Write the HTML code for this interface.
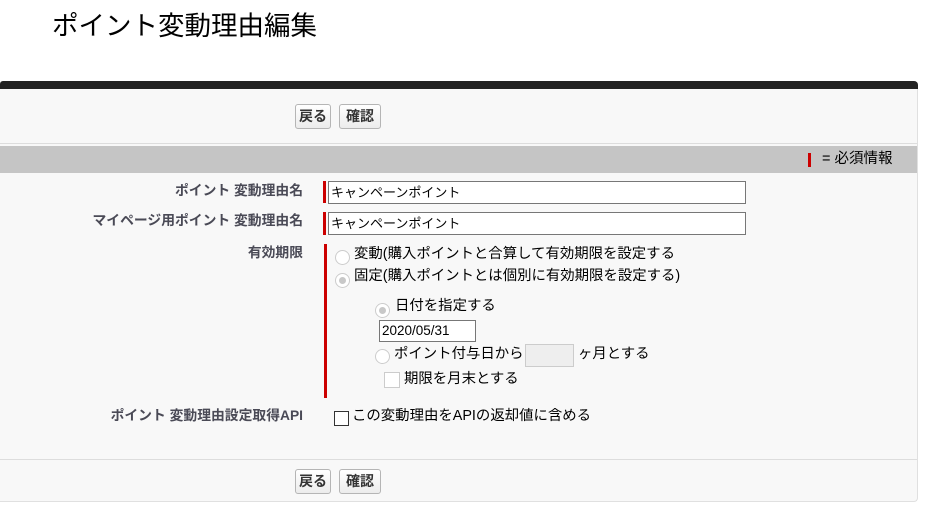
<!DOCTYPE html>
<html><head><meta charset="utf-8"><style>
*{margin:0;padding:0;box-sizing:border-box}
body{width:928px;height:508px;background:#fff;font-family:"Liberation Sans","Noto Sans CJK JP",sans-serif;position:relative;overflow:hidden;color:#000}
.a{position:absolute;white-space:nowrap}
.title{left:52px;top:9px;font-size:26.5px;line-height:34px;color:#000}
.panel{left:0;top:81px;width:918px;height:421px;background:#f8f8f8;border-radius:0 4px 4px 0;border-right:1px solid #e0e0e0;border-bottom:1px solid #e0e0e0}
.bar{left:0;top:81px;width:918px;height:8px;background:#222;border-radius:3px 4px 0 0}
.btn{height:25px;border:1px solid #b5b5b5;border-radius:3px;background:linear-gradient(#fff,#ececec);font-size:14px;font-weight:bold;color:#333;line-height:23px;text-align:center}
.lbl{font-size:13.8px;font-weight:bold;color:#4a4a56;text-align:right;right:625px;line-height:18px}
.inp{background:#fff;border:1px solid #777;height:23px;font-size:13px;line-height:21px;padding-left:2px}
.red{background:#c00;width:3px}
.t{font-size:14.4px;color:#000;line-height:18px}
.rad{width:15px;height:15px;border-radius:50%;border:1px solid #ccc;background:#fff}
.rad.on::after{content:"";position:absolute;left:3px;top:3px;width:7px;height:7px;border-radius:50%;background:#c8c8c8}
</style></head><body>
<div class="a title">ポイント変動理由編集</div>
<div class="a panel"></div>
<div class="a bar"></div>
<div class="a btn" style="left:295px;top:104px;width:36px">戻る</div>
<div class="a btn" style="left:339px;top:104px;width:42px">確認</div>
<div class="a" style="left:0;top:143px;width:917px;height:1px;background:#ddd"></div>
<div class="a" style="left:0;top:146px;width:917px;height:27px;background:#c5c5c5"></div>
<div class="a red" style="left:808px;top:153px;height:14px"></div>
<div class="a" style="left:822px;top:150px;font-size:14.5px;line-height:18px">= 必須情報</div>

<div class="a lbl" style="top:182px">ポイント 変動理由名</div>
<div class="a red" style="left:323px;top:181px;height:22px"></div>
<div class="a inp" style="left:328px;top:181px;width:418px">キャンペーンポイント</div>
<div class="a lbl" style="top:212px">マイページ用ポイント 変動理由名</div>
<div class="a red" style="left:323px;top:212px;height:23px"></div>
<div class="a inp" style="left:328px;top:212px;width:418px">キャンペーンポイント</div>

<div class="a lbl" style="top:244px">有効期限</div>
<div class="a red" style="left:324px;top:244px;height:154px"></div>
<div class="a rad" style="left:335px;top:250px"></div>
<div class="a t" style="left:354px;top:245px">変動(購入ポイントと合算して有効期限を設定する</div>
<div class="a rad on" style="left:335px;top:273px"></div>
<div class="a t" style="left:354px;top:267px">固定(購入ポイントとは個別に有効期限を設定する)</div>
<div class="a rad on" style="left:375px;top:303px"></div>
<div class="a t" style="left:395px;top:297px">日付を指定する</div>
<div class="a" style="left:379px;top:320px;width:97px;height:22px;border:1px solid #777;background:#fff;font-size:13.5px;line-height:20px;padding-left:2px">2020/05/31</div>
<div class="a rad" style="left:375px;top:349px"></div>
<div class="a t" style="left:394px;top:345px">ポイント付与日から</div>
<div class="a" style="left:525px;top:344px;width:49px;height:23px;border:1px solid #ccc;background:#eee"></div>
<div class="a t" style="left:578px;top:345px">ヶ月とする</div>
<div class="a" style="left:384px;top:372px;width:16px;height:16px;border:1px solid #ccc;background:#fff"></div>
<div class="a t" style="left:404px;top:370px">期限を月末とする</div>

<div class="a lbl" style="top:407px">ポイント 変動理由設定取得API</div>
<div class="a" style="left:334px;top:411px;width:15px;height:15px;border:1px solid #333;background:#fff"></div>
<div class="a t" style="left:352px;top:407px">この変動理由をAPIの返却値に含める</div>

<div class="a" style="left:0;top:459px;width:917px;height:1px;background:#ddd"></div>
<div class="a btn" style="left:295px;top:469px;width:36px">戻る</div>
<div class="a btn" style="left:339px;top:469px;width:42px">確認</div>
</body></html>
